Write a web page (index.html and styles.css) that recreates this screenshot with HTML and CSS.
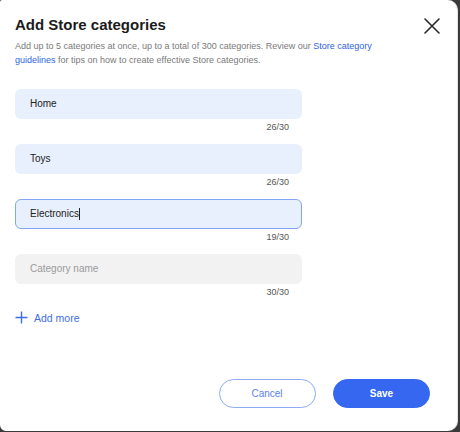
FILE: index.html
```html
<!DOCTYPE html>
<html lang="en">
<head>
<meta charset="utf-8">
<title>Add Store categories</title>
<link rel="stylesheet" href="styles.css">
</head>
<body>
<div class="modal">
  <div class="header">
    <h1 class="title">Add Store categories</h1>
    <button class="close" aria-label="Close">
      <svg width="16" height="16" viewBox="0 0 16 16"><path d="M1 1L15 15M15 1L1 15" stroke="#2a2a2a" stroke-width="1.6" fill="none" stroke-linecap="round"/></svg>
    </button>
  </div>
  <p class="desc">Add up to 5 categories at once, up to a total of 300 categories. Review our <a href="#" class="link">Store category guidelines</a> for tips on how to create effective Store categories.</p>

  <div class="fields">
    <div class="field">
      <div class="input filled">Home</div>
      <div class="count">26/30</div>
    </div>
    <div class="field">
      <div class="input filled">Toys</div>
      <div class="count">26/30</div>
    </div>
    <div class="field">
      <div class="input filled focused">Electronics<span class="caret"></span></div>
      <div class="count">19/30</div>
    </div>
    <div class="field">
      <div class="input empty">Category name</div>
      <div class="count">30/30</div>
    </div>
  </div>

  <button class="add-more">
    <svg width="13" height="13" viewBox="0 0 13 13"><path d="M6.5 0.5V12.5M0.5 6.5H12.5" stroke="#3d6ef0" stroke-width="1.4" fill="none"/></svg>
    <span>Add more</span>
  </button>

  <div class="footer">
    <button class="btn btn-cancel">Cancel</button>
    <button class="btn btn-save">Save</button>
  </div>
</div>
</body>
</html>
```
FILE: styles.css
```css
html, body {
  margin: 0;
  padding: 0;
}
body {
  width: 460px;
  height: 432px;
  background: #3a3a3a;
  font-family: "Liberation Sans", Arial, sans-serif;
  overflow: hidden;
}
.modal {
  width: 458px;
  height: 431px;
  box-sizing: border-box;
  background: #fff;
  border-right: 1px solid #e2e2e2;
  border-radius: 2px 10px 10px 6px;
  padding: 16px 15px 23px 15px;
  display: flex;
  flex-direction: column;
}
.header {
  display: flex;
  justify-content: space-between;
  align-items: flex-start;
}
.title {
  margin: 0;
  font-size: 15px;
  line-height: 18px;
  font-weight: bold;
  color: #1b1b1b;
}
.close {
  border: 0;
  background: none;
  padding: 0;
  margin: 2px 2px 0 0;
  width: 16px;
  height: 16px;
  display: flex;
}
.desc {
  margin: 6px 0 0 0;
  max-width: 380px;
  font-size: 9px;
  line-height: 13.5px;
  color: #7a7a7a;
}
.link {
  color: #2f64e6;
  text-decoration: none;
}
.fields {
  margin-top: 22px;
  display: flex;
  flex-direction: column;
  gap: 11.5px;
  width: 287px;
}
.field {
  display: flex;
  flex-direction: column;
}
.input {
  box-sizing: border-box;
  height: 29.5px;
  border-radius: 6px;
  padding: 0 14px;
  display: flex;
  align-items: center;
  font-size: 10px;
  color: #222;
  border: 1px solid transparent;
}
.input.filled {
  background: #e8effd;
}
.input.focused {
  border-color: #84a4f6;
}
.input.empty {
  background: #f2f2f3;
  color: #9a9a9a;
}
.caret {
  display: inline-block;
  width: 1px;
  height: 12px;
  background: #222;
  margin-left: 0.5px;
}
.count {
  margin-top: 2px;
  padding-right: 13px;
  text-align: right;
  font-size: 9px;
  line-height: 12px;
  color: #555;
}
.add-more {
  margin-top: 13px;
  align-self: flex-start;
  border: 0;
  background: none;
  padding: 0;
  display: flex;
  align-items: center;
  gap: 6px;
  font-family: inherit;
  font-size: 10.5px;
  line-height: 14px;
  color: #3d6ef0;
}
.footer {
  margin-top: auto;
  display: flex;
  justify-content: flex-end;
  gap: 17.5px;
  padding-right: 12px;
}
.btn {
  box-sizing: border-box;
  width: 97px;
  height: 29.5px;
  border-radius: 15px;
  font-family: inherit;
  font-size: 10px;
  padding: 0;
}
.btn-cancel {
  background: #fff;
  border: 1px solid #8eabf7;
  color: #5a82ee;
}
.btn-save {
  background: #3567f0;
  border: 1px solid #3567f0;
  color: #fff;
  font-weight: bold;
}
```
